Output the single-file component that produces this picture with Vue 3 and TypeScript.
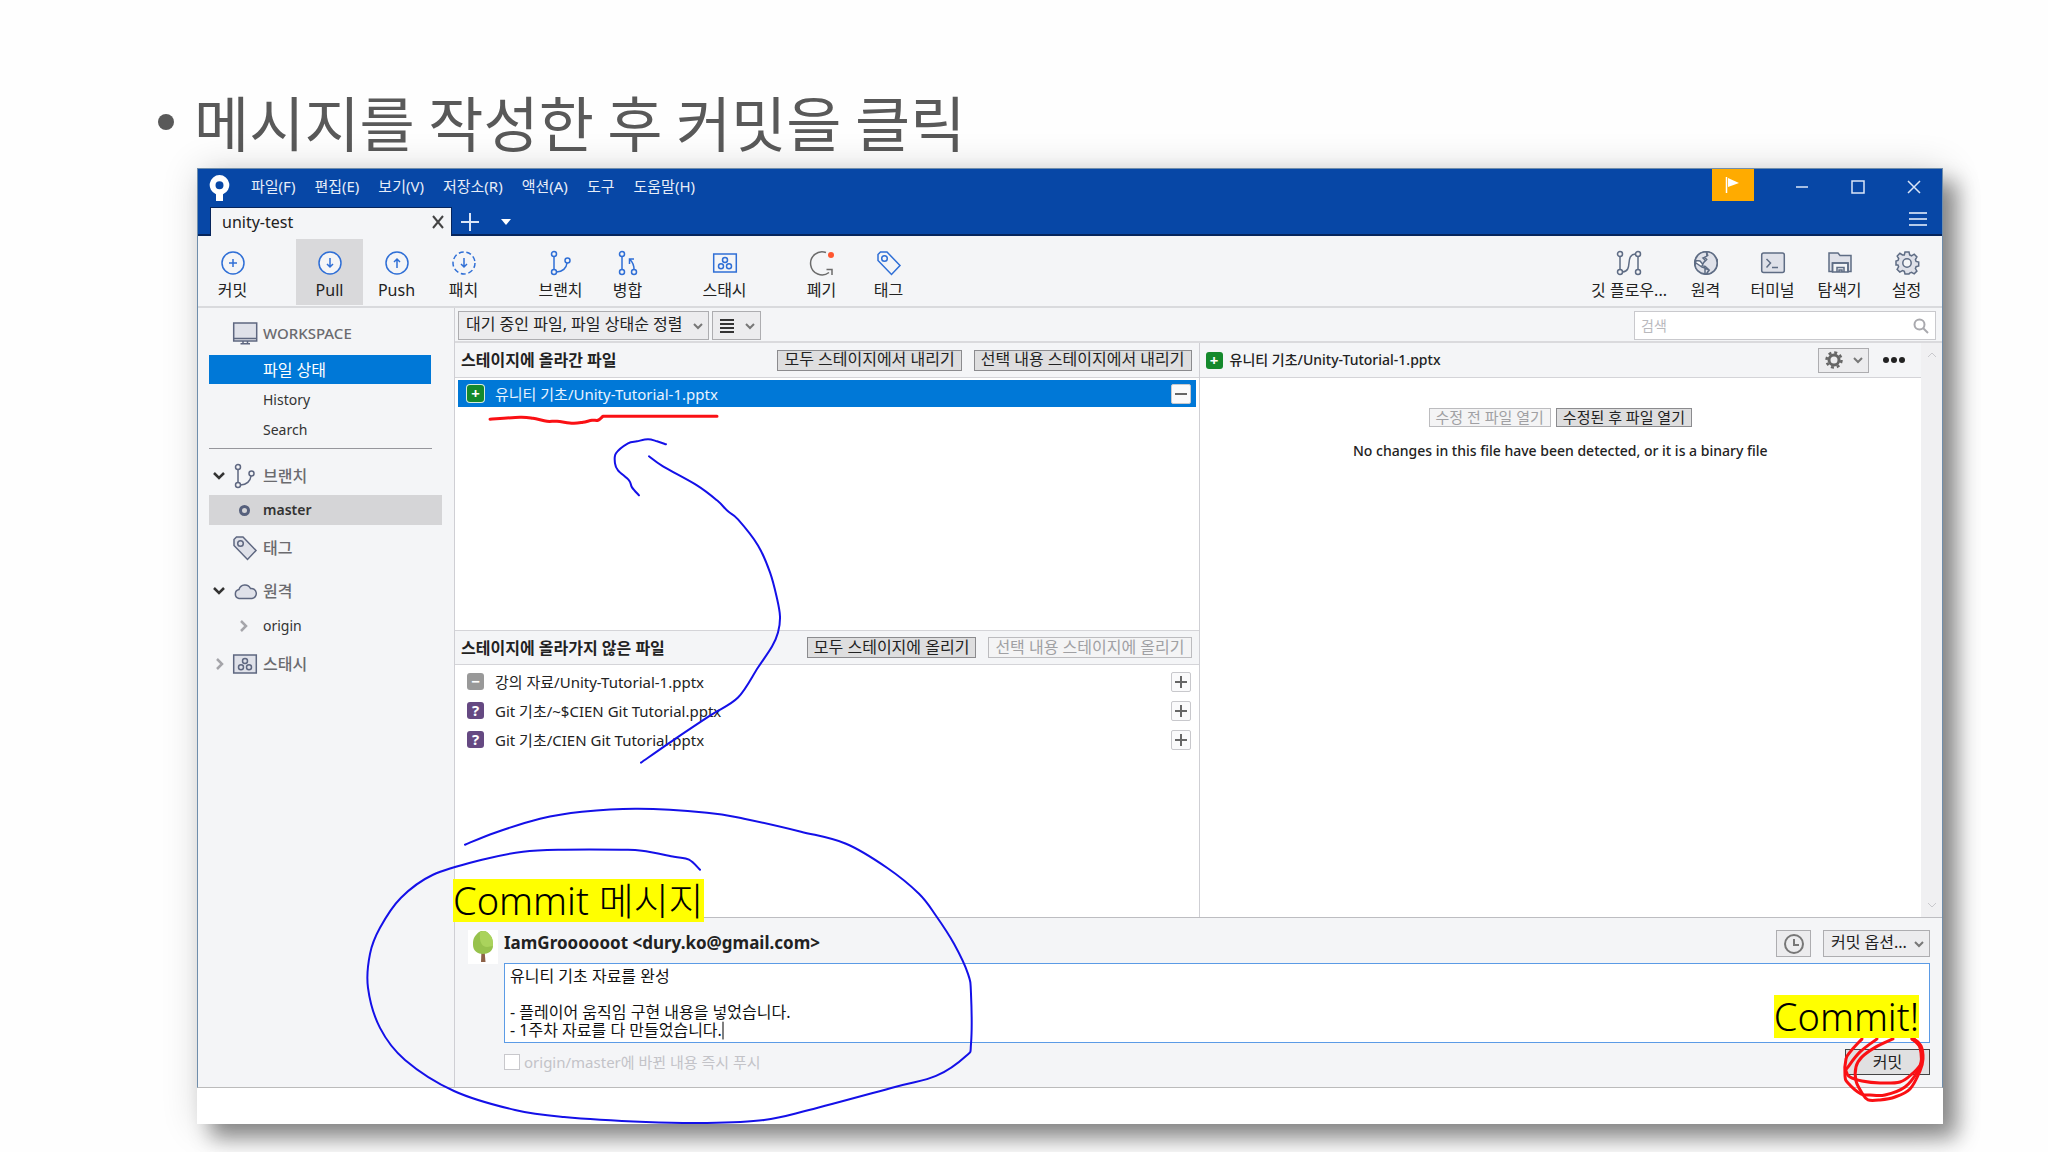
<script setup lang="ts">
import { ref } from 'vue'

type Point = [number, number]

const ICONS: Record<string, string> = {
  commit: '<circle cx="12" cy="12" r="11"/><path d="M12 8v8M8 12h8"/>',
  pull: '<circle cx="12" cy="12" r="11"/><path d="M12 7v9M9 13l3 3 3-3"/>',
  push: '<circle cx="12" cy="12" r="11"/><path d="M12 17V8M9 11l3-3 3 3"/>',
  fetch: '<circle cx="12" cy="12" r="11" stroke-dasharray="5 2.7"/><path d="M12 7v9M9 13l3 3 3-3"/>',
  branch: '<circle cx="5" cy="3" r="2.5"/><circle cx="5" cy="21" r="2.5"/><circle cx="18.500" cy="9.500" r="2.500"/><path d="M5 5.500v13M7.500 21c6 0 10-4 10.500-9"/>',
  merge: '<circle cx="6" cy="3" r="2.500"/><circle cx="6" cy="21" r="2.500"/><circle cx="18" cy="21" r="2.500"/><path d="M6 5.500v13M18 18.500c0-4-1-7-4-10M13.500 13V8H18"/>',
  stash: '<path d="M.7 3h22.600v18H.7z"/><circle cx="12" cy="9" r="2.500"/><circle cx="8" cy="15.300" r="2.500"/><circle cx="16" cy="15.300" r="2.500"/>',
  discard: '<path d="M16 1.500A11.500 11.500 0 1 0 19 21.500M16.500 18.500H22V24"/><circle cx="21" cy="4" r="3" fill="#ff5630" stroke="none"/>',
  tag: '<path d="M1 3.500 3.500 1H10l13 13.500L14.500 23.500 1 9.500z"/><circle cx="7.500" cy="7.500" r="2.800"/>',
  flow: '<circle cx="3" cy="3" r="2.500"/><circle cx="3" cy="21" r="2.500"/><circle cx="21" cy="3" r="2.500"/><circle cx="21" cy="21" r="2.500"/><path d="M3 5.500v13M21 5.500v13M5.500 21C17 20 7 4 18.500 3"/>',
  globe: '<circle cx="12" cy="12" r="11.300" fill="#fff"/><path d="M12.500.8C5 .8 1 6 .9 12l1.500-2.500L6 10l3 3.500 2.500-4L9 7l4-1.500zM2 12l6 4 3 1v6C6 22 1.500 19 1 14zM23 9l-3.500 2 .5 4 2 .5zM11 17l4 2-2 4h-2z" fill="#dfe1e9"/><path d="M12.500.8C19 .8 23 6 23.200 12c0 6-4.500 11-11 11.200l3-4.200-4-3.500-3-1 1.500-3 3-3-2-2 3-2z" fill="#dfe1e9"/>',
  terminal: '<rect x=".7" y="2" width="22.600" height="19.500" rx="2" fill="#dfe1e9"/><path d="m5.500 8 4 4-4 4.500M11 16.500h6"/>',
  explorer: '<path d="M1 20.500V2h9l2 2.500h11v16h-3V12H4.500v8.500z" fill="#dfe1e9"/><path d="M4.500 12H20v9H4.500zM9 21v-4.500h7V21M11 21v-2h3v2"/>',
  gear: '<path d="M10 1h4l.7 3 1.800.8 2.700-1.600 2.700 2.700-1.500 2.700.7 1.800 2.600.6v4l-2.600.7-.7 1.800 1.500 2.600-2.700 2.700-2.700-1.500-1.800.7L14 23h-4l-.7-2.700-1.800-.7-2.700 1.500-2.700-2.700 1.500-2.600-.7-1.800L1 14v-4l2-.6.7-1.800L2.200 5l2.700-2.700 2.600 1.600L9.300 4z" fill="#dfe1e9"/><circle cx="12" cy="12" r="4.200" fill="#f4f5f7"/>',
  monitor: '<rect x=".7" y="2" width="23" height="18" fill="#dfe1e9"/><path d="M.7 17.500h23M10 20v2.500M14.500 20v2.500M7.500 22.700h9.500"/>',
  cloud: '<path d="M6 19.500a4.600 4.600 0 0 1 0-9A6.200 6.200 0 0 1 17.500 9.500a5 5 0 0 1 1.500 10z" fill="#dfe1e9"/>',
}

const menus = ['파일(F)', '편집(E)', '보기(V)', '저장소(R)', '액션(A)', '도구', '도움말(H)']

const toolGroups = [
  [{ icon: 'commit', label: '커밋' }],
  [
    { icon: 'pull', label: 'Pull', active: true },
    { icon: 'push', label: 'Push' },
    { icon: 'fetch', label: '패치' },
  ],
  [
    { icon: 'branch', label: '브랜치' },
    { icon: 'merge', label: '병합' },
  ],
  [{ icon: 'stash', label: '스태시' }],
  [
    { icon: 'discard', label: '폐기', grey: true },
    { icon: 'tag', label: '태그' },
  ],
] as { icon: string; label: string; active?: boolean; grey?: boolean }[][]

const sideTools = [
  { icon: 'flow', label: '깃 플로우...' },
  { icon: 'globe', label: '원격' },
  { icon: 'terminal', label: '터미널' },
  { icon: 'explorer', label: '탐색기' },
  { icon: 'gear', label: '설정' },
]

const unstaged = [
  { kind: 'removed', mark: '−', name: '강의 자료/Unity-Tutorial-1.pptx' },
  { kind: 'unknown', mark: '?', name: 'Git 기초/~$CIEN Git Tutorial.pptx' },
  { kind: 'unknown', mark: '?', name: 'Git 기초/CIEN Git Tutorial.pptx' },
]

const message = ref('유니티 기초 자료를 완성\n\n- 플레이어 움직임 구현 내용을 넣었습니다.\n- 1주차 자료를 다 만들었습니다.')

// Smooth curve through hand-drawn points (Catmull-Rom to cubic Bézier).
function smooth(p: Point[]): string {
  let d = `M${p[0][0]} ${p[0][1]}`
  for (let i = 0; i < p.length - 1; i++) {
    const a = p[Math.max(i - 1, 0)]
    const b = p[i]
    const c = p[i + 1]
    const e = p[Math.min(i + 2, p.length - 1)]
    d += `C${b[0] + (c[0] - a[0]) / 6} ${b[1] + (c[1] - a[1]) / 6} ${c[0] - (e[0] - b[0]) / 6} ${c[1] - (e[1] - b[1]) / 6} ${c[0]} ${c[1]}`
  }
  return d
}

const bluePen = [
  smooth([[666, 444], [657, 441], [648, 439], [637, 441], [628, 443], [616, 453], [615, 463], [618, 470], [629, 480], [632, 487], [639, 495]]),
  smooth([[649, 456], [663, 466], [697, 485], [717, 500], [728, 511], [738, 519], [758, 545], [770, 572], [777, 598], [780, 616], [778, 632], [772, 646], [758, 667], [738, 697], [710, 715], [677, 737], [641, 762]]),
  smooth([[465, 844], [495, 832], [540, 818], [582, 811], [638, 808], [707, 812], [744, 818], [801, 831], [846, 843], [887, 867], [919, 893], [936, 915], [954, 943], [968, 973], [971, 993], [971, 1043], [966, 1055], [936, 1075], [895, 1086], [809, 1109], [764, 1119], [707, 1122], [646, 1121], [564, 1116], [515, 1109], [454, 1090], [405, 1059], [380, 1027], [368, 987], [370, 953], [380, 927], [401, 897], [433, 874], [482, 859], [523, 851], [564, 849], [621, 849], [642, 850], [674, 856], [689, 859], [700, 869]]),
]

const redPen = [
  smooth([[490, 419], [520, 417], [533, 418], [547, 421], [557, 421], [573, 423], [583, 422], [592, 420], [598, 420], [603, 416]]) + 'L717 416',
  smooth([[1862, 1038], [1851, 1050], [1846, 1058], [1845, 1075], [1848, 1082], [1861, 1093], [1870, 1094], [1885, 1094], [1905, 1086], [1918, 1070], [1922, 1058], [1920, 1046], [1912, 1038]]),
  smooth([[1877, 1038], [1860, 1051], [1848, 1066], [1846, 1070], [1850, 1076], [1862, 1080], [1880, 1082], [1900, 1081], [1912, 1073], [1921, 1062], [1919, 1043], [1912, 1038]]),
  smooth([[1893, 1038], [1876, 1046], [1862, 1056], [1856, 1066], [1856, 1080], [1862, 1092], [1868, 1099], [1880, 1099], [1895, 1096], [1910, 1088], [1920, 1070], [1923, 1058], [1921, 1045], [1914, 1038]]),
]
</script>

<template>
  <main class="slide">
    <h1 class="title"><span class="bullet"></span>메시지를 작성한 후 커밋을 클릭</h1>

    <section class="shot">
      <div class="app">
        <header class="titlebar">
          <div class="menubar">
            <svg class="logo" viewBox="0 0 22 26"><path fill="#fff" fill-rule="evenodd" d="M10.500 0a10 10 0 0 1 3.500 19.300V26H7v-6.700A10 10 0 0 1 10.500 0zm0 6.200a4 4 0 1 0 0 8 4 4 0 0 0 0-8z" /></svg>
            <nav class="menus"><button v-for="m in menus" :key="m" type="button">{{ m }}</button></nav>
            <button class="flag" type="button" aria-label="알림"><svg width="16" height="18" viewBox="0 0 16 18"><path d="M1.500 1v16" stroke="#fff" stroke-width="1.500" /><path d="M3 2l11 5-11 4z" fill="#fff" /></svg></button>
            <div class="window-buttons">
              <button type="button" aria-label="최소화"><svg viewBox="0 0 14 14"><path d="M1 7h12" /></svg></button>
              <button type="button" aria-label="최대화"><svg viewBox="0 0 14 14"><path d="M1 1h12v12H1z" /></svg></button>
              <button type="button" aria-label="닫기"><svg viewBox="0 0 14 14"><path d="M1 1l12 12M13 1 1 13" /></svg></button>
            </div>
          </div>
          <div class="tabs">
            <div class="tab">
              <span>unity-test</span>
              <button type="button" aria-label="탭 닫기"><svg width="12" height="14" viewBox="0 0 12 14"><path d="M1 1l10 12M11 1 1 13" stroke="#444" stroke-width="2" /></svg></button>
            </div>
            <button class="add" type="button" aria-label="새 탭"><svg width="18" height="18" viewBox="0 0 18 18"><path d="M9 0v18M0 9h18" stroke="#dbe6f7" stroke-width="2" /></svg></button>
            <button class="more" type="button" aria-label="탭 목록"><svg width="10" height="6" viewBox="0 0 10 6"><path d="M0 0h10L5 6z" fill="#fff" /></svg></button>
            <button class="burger" type="button" aria-label="메뉴"><svg width="18" height="16" viewBox="0 0 18 16"><path d="M0 2h18M0 8h18M0 14h18" stroke="#b6cbea" stroke-width="2" /></svg></button>
          </div>
        </header>

        <div class="toolbar">
          <div v-for="(g, i) in toolGroups" :key="i" class="group">
            <button v-for="t in g" :key="t.label" type="button" class="tool" :class="{ active: t.active, grey: t.grey }">
              <svg viewBox="-1 -1 26 26" v-html="ICONS[t.icon]"></svg>
              <span>{{ t.label }}</span>
            </button>
          </div>
          <div class="group end">
            <button v-for="t in sideTools" :key="t.label" type="button" class="tool slate">
              <svg viewBox="-1 -1 26 26" v-html="ICONS[t.icon]"></svg>
              <span>{{ t.label }}</span>
            </button>
          </div>
        </div>

        <div class="body">
          <aside class="sidebar">
            <div class="head workspace"><svg viewBox="-1 -1 26 26" v-html="ICONS.monitor"></svg>WORKSPACE</div>
            <a href="#" class="entry selected">파일 상태</a>
            <a href="#" class="entry">History</a>
            <a href="#" class="entry">Search</a>
            <hr />
            <div class="head branches">
              <svg class="fold" viewBox="0 0 12 12"><path d="m1 3 5 5 5-5" /></svg>
              <svg viewBox="-1 -1 26 26" v-html="ICONS.branch"></svg>브랜치
            </div>
            <a href="#" class="entry master"><i class="dot"></i>master</a>
            <div class="head tall"><svg class="filled" viewBox="-1 -1 26 26" v-html="ICONS.tag"></svg>태그</div>
            <div class="head">
              <svg class="fold" viewBox="0 0 12 12"><path d="m1 3 5 5 5-5" /></svg>
              <svg viewBox="-1 -1 26 26" v-html="ICONS.cloud"></svg>원격
            </div>
            <a href="#" class="entry origin"><svg class="fold shut" viewBox="0 0 12 12"><path d="m4 1 5 5-5 5" /></svg>origin</a>
            <div class="head tall">
              <svg class="fold shut" viewBox="0 0 12 12"><path d="m4 1 5 5-5 5" /></svg>
              <svg class="filled" viewBox="-1 -1 26 26" v-html="ICONS.stash"></svg>스태시
            </div>
          </aside>

          <div class="main">
            <div class="filters">
              <div class="picker">
                <select aria-label="정렬"><option>대기 중인 파일, 파일 상태순 정렬</option></select>
                <svg class="caret" viewBox="0 0 10 8"><path d="m1 2 4 4 4-4" /></svg>
              </div>
              <button type="button" class="picker view" aria-label="보기 방식">
                <svg width="14" height="16" viewBox="0 0 14 16"><path d="M0 2h14M0 6h14M0 10h14M0 14h14" stroke="#333" stroke-width="2" /></svg>
                <svg class="caret" viewBox="0 0 10 8"><path d="m1 2 4 4 4-4" /></svg>
              </button>
              <div class="search">
                <input type="text" placeholder="검색" aria-label="검색" />
                <svg width="16" height="16" viewBox="0 0 16 16" fill="none" stroke="#a9a9ae" stroke-width="2"><circle cx="6.500" cy="6.500" r="5" /><path d="m10 10 5 5" /></svg>
              </div>
            </div>

            <div class="panes">
              <div class="files">
                <div class="bar">
                  <h2>스테이지에 올라간 파일</h2>
                  <button type="button" class="flat">모두 스테이지에서 내리기</button>
                  <button type="button" class="flat">선택 내용 스테이지에서 내리기</button>
                </div>
                <ul class="list">
                  <li class="row chosen">
                    <span class="badge added">+</span><span class="name">유니티 기초/Unity-Tutorial-1.pptx</span>
                    <button type="button" aria-label="내리기"><svg viewBox="0 0 12 12"><path d="M0 6h12" /></svg></button>
                  </li>
                </ul>
                <div class="bar second">
                  <h2>스테이지에 올라가지 않은 파일</h2>
                  <button type="button" class="flat">모두 스테이지에 올리기</button>
                  <button type="button" class="flat" disabled>선택 내용 스테이지에 올리기</button>
                </div>
                <ul class="list">
                  <li v-for="f in unstaged" :key="f.name" class="row">
                    <span class="badge" :class="f.kind">{{ f.mark }}</span><span class="name">{{ f.name }}</span>
                    <button type="button" aria-label="올리기"><svg viewBox="0 0 12 12"><path d="M0 6h12M6 0v12" /></svg></button>
                  </li>
                </ul>
              </div>

              <div class="diff">
                <div class="diff-main">
                  <div class="bar">
                    <span class="badge added">+</span><span class="name">유니티 기초/Unity-Tutorial-1.pptx</span>
                    <button type="button" class="picker gear" aria-label="설정">
                      <svg width="18" height="18" viewBox="0 0 18 18"><circle cx="9" cy="9" r="5" fill="none" stroke="#666" stroke-width="3" /><circle cx="9" cy="9" r="7.500" fill="none" stroke="#666" stroke-width="2.500" stroke-dasharray="3 2.890" /></svg>
                      <svg class="caret" viewBox="0 0 10 8"><path d="m1 2 4 4 4-4" /></svg>
                    </button>
                    <button type="button" class="dots" aria-label="더 보기"><i></i><i></i><i></i></button>
                  </div>
                  <div class="empty">
                    <div class="open">
                      <button type="button" class="flat" disabled>수정 전 파일 열기</button>
                      <button type="button" class="flat">수정된 후 파일 열기</button>
                    </div>
                    <p>No changes in this file have been detected, or it is a binary file</p>
                  </div>
                </div>
                <div class="scroll">
                  <svg viewBox="0 0 10 8"><path d="m1 6 4-4 4 4" /></svg>
                  <svg viewBox="0 0 10 8"><path d="m1 2 4 4 4-4" /></svg>
                </div>
              </div>
            </div>

            <form class="commit" @submit.prevent>
              <div class="author">
                <svg class="avatar" viewBox="0 0 30 34"><path d="M0 0h30v34H0z" fill="#fff" /><path d="M13.500 20h3l1 12h-4.500z" fill="#8d6147" /><path d="M15 1c4 0 5 2 7 4 3 3 3 8 3 11 0 5-5 8-10 8S5 21 5 15c0-3 0-7 3-10 2-2 3-4 7-4z" fill="#97c24c" /><path d="M15 1c4 0 5 2 7 4 3 3 3 8 3 11l-6 1c-5 0-8-5-7-15z" fill="#aad35c" /></svg>
                <strong>IamGroooooot &lt;dury.ko@gmail.com&gt;</strong>
                <button type="button" class="picker clock" aria-label="이전 메시지"><svg width="20" height="20" viewBox="0 0 20 20" fill="none" stroke="#777" stroke-width="2"><circle cx="10" cy="10" r="9" /><path d="M10 5v6h5" /></svg></button>
                <div class="picker options">
                  <select aria-label="커밋 옵션"><option>커밋 옵션...</option></select>
                  <svg class="caret" viewBox="0 0 10 8"><path d="m1 2 4 4 4-4" /></svg>
                </div>
              </div>
              <div class="editor">
                <textarea v-model="message" rows="4" spellcheck="false" aria-label="커밋 메시지"></textarea>
              </div>
              <div class="submit">
                <label><input type="checkbox" disabled />origin/master에 바뀐 내용 즉시 푸시</label>
                <button type="submit" class="go">커밋</button>
              </div>
            </form>
          </div>
        </div>
      </div>

      <svg class="pen" viewBox="197 168 1746 955" preserveAspectRatio="none">
        <path v-for="d in bluePen" :key="d" :d="d" stroke="#1410e8" stroke-width="2" />
        <path v-for="d in redPen" :key="d" :d="d" stroke="#fa1014" stroke-width="3" />
        <path d="M723 1021v17" stroke="#000" stroke-width="1" />
      </svg>
      <mark class="note message">Commit 메시지</mark>
      <mark class="note button">Commit!</mark>
    </section>
  </main>
</template>

<style>
body {
  margin: 0;
  background: #fefefe;
}
</style>

<style scoped>
.slide {
  box-sizing: border-box;
  min-height: 100vh;
  padding: 80px 105px 29px 197px;
  overflow: hidden;
  font: 16px/20px "Noto Sans", "Noto Sans CJK KR", sans-serif;
  color: #222;
}
.slide * {
  box-sizing: border-box;
}
button, select, input, textarea {
  font: inherit;
  color: inherit;
  margin: 0;
  border-radius: 0;
}
button {
  display: flex;
  align-items: center;
  justify-content: center;
  padding: 0;
  border: 0;
  background: none;
  white-space: nowrap;
}
.title {
  position: relative;
  margin: 0 0 0 -3px;
  padding-bottom: 6px;
  font: 400 60px/82px "Noto Sans CJK KR", sans-serif;
  color: #595959;
}
.bullet {
  position: absolute;
  left: -36px;
  top: 34px;
  width: 16px;
  height: 16px;
  border-radius: 50%;
  background: #595959;
}
.shot {
  position: relative;
  padding-bottom: 36px;
  background: #fff;
  box-shadow: 14px 14px 20px rgba(0, 0, 0, 0.42), 2px 2px 36px rgba(0, 0, 0, 0.16);
}
.app {
  border: 1px solid #6f8dab;
  border-bottom-color: #bbb;
  background: #f4f5f7;
}

.titlebar {
  background: #0747a6;
  color: #e6edf8;
  border-bottom: 1px solid #f4f5f7;
}
.menubar {
  display: flex;
  height: 38px;
}
.logo {
  width: 22px;
  height: 26px;
  margin: 6px 20px 0 11px;
}
.menus {
  display: flex;
  gap: 19px;
  font-size: 15px;
}
.menus button {
  height: 34px;
}
.flag {
  width: 42px;
  height: 32px;
  margin-left: auto;
  margin-right: 20px;
  background: #ffab00;
}
.window-buttons {
  display: flex;
}
.window-buttons button {
  width: 56px;
  height: 36px;
}
.window-buttons svg {
  width: 14px;
  height: 14px;
  fill: none;
  stroke: #dbe6f7;
  stroke-width: 1.5;
}
.tabs {
  display: flex;
  align-items: center;
  height: 29px;
  padding-left: 12px;
  box-shadow: inset 0 -2px #06255c;
}
.tab {
  display: flex;
  align-items: center;
  justify-content: space-between;
  width: 242px;
  height: 29px;
  padding: 0 7px 0 11px;
  border: 1px solid #06255c;
  border-bottom: 0;
  background: #f4f5f7;
  color: #222;
}
.add {
  margin-left: 9px;
}
.more {
  margin-left: 22px;
}
.burger {
  margin: 0 15px 6px auto;
}

.toolbar {
  display: flex;
  gap: 30px;
  height: 71px;
  padding: 2px 2px 0 1px;
  border-bottom: 2px solid #d9dadd;
}
.group {
  display: flex;
}
.end {
  margin-left: auto;
}
.tool {
  flex-direction: column;
  justify-content: flex-start;
  gap: 4px;
  min-width: 67px;
  height: 66px;
  padding-top: 11px;
  color: #222;
}
.end .tool:first-child {
  min-width: 86px;
}
.tool svg {
  width: 26px;
  height: 26px;
  fill: none;
  stroke: #2f6fd6;
  stroke-width: 1.5;
}
.tool.active {
  background: #d9d9db;
}
.tool.active svg {
  fill: #f4f5f7;
}
.tool.grey svg {
  stroke: #6b6b6b;
}
.tool.slate svg {
  stroke: #5e6c84;
}

.body {
  display: grid;
  grid-template-columns: 257px 1fr;
}
.sidebar {
  padding: 12px 12px 0 11px;
  border-right: 1px solid #cfcfd4;
  color: #333;
}
.head {
  position: relative;
  display: flex;
  align-items: center;
  gap: 5px;
  height: 40px;
  padding-left: 23px;
  color: #6b6b6f;
  font-weight: 500;
}
.head svg {
  width: 26px;
  height: 26px;
  fill: none;
  stroke: #5e6780;
  stroke-width: 1.5;
}
.head svg.filled {
  fill: #dfe1e9;
}
.head .fold {
  position: absolute;
  left: 4px;
}
.sidebar .fold {
  width: 12px;
  height: 12px;
  fill: none;
  stroke: #333;
  stroke-width: 2.5;
}
.sidebar .fold.shut {
  stroke: #a5a5aa;
}
.head.workspace {
  height: 26px;
  margin-bottom: 9px;
  font-size: 15px;
}
.head.branches {
  height: 38px;
}
.head.tall {
  height: 46px;
}
.entry {
  display: flex;
  align-items: center;
  height: 30px;
  margin-right: 11px;
  padding-left: 54px;
  font-size: 14px;
  color: #333;
  text-decoration: none;
}
.entry.selected {
  height: 29px;
  margin-bottom: 1px;
  background: #0078d7;
  color: #fff;
  font-size: 16px;
}
hr {
  margin: 3px 10px 8px 0;
  border: 0;
  border-top: 1px solid #96969c;
}
.entry.master {
  margin-right: 0;
  padding-left: 30px;
  gap: 13px;
  background: #d5d5d7;
  font-weight: 600;
}
.dot {
  width: 11px;
  height: 11px;
  border: 3px solid #56607c;
  border-radius: 50%;
}
.entry.origin {
  padding-left: 28px;
  gap: 14px;
}

.main {
  display: flex;
  flex-direction: column;
  min-width: 0;
}
.filters {
  display: flex;
  gap: 3px;
  height: 35px;
  padding: 3px 6px 0 3px;
  border-bottom: 2px solid #dadadd;
}
.picker {
  position: relative;
  display: flex;
  align-items: center;
  height: 29px;
  border: 1px solid #adadb0;
  background: #ececee;
}
.picker select {
  height: 100%;
  appearance: none;
  border: 0;
  padding: 0 25px 3px 7px;
  background: none;
}
.caret {
  position: absolute;
  right: 5px;
  width: 10px;
  height: 8px;
  fill: none;
  stroke: #777;
  stroke-width: 2;
}
.view {
  width: 49px;
  justify-content: flex-start;
  padding-left: 7px;
}
.search {
  display: flex;
  align-items: center;
  width: 302px;
  height: 29px;
  margin-left: auto;
  padding: 0 6px;
  border: 1px solid #c9c9cd;
  background: #fff;
}
.search input {
  flex: 1;
  min-width: 0;
  border: 0;
  padding: 0;
  background: none;
  font-size: 14px;
}
.search input::placeholder {
  color: #b9b9bd;
}

.panes {
  display: grid;
  grid-template-columns: 1fr 1fr;
  min-height: 574px;
}
.files {
  display: grid;
  grid-template-rows: auto 1fr auto 1fr;
  background: #fff;
}
.bar {
  display: flex;
  align-items: center;
  gap: 12px;
  height: 35px;
  padding: 0 7px 0 6px;
  border-bottom: 1px solid #d4d4d8;
  background: #f4f5f7;
}
.bar.second {
  border-top: 1px solid #d4d4d8;
}
.bar h2 {
  margin: 0 auto 0 0;
  font-size: 16px;
  font-weight: 700;
}
.flat {
  height: 21px;
  padding: 0 6px 2px;
  border: 1px solid #8b8b8e;
  background: #dededf;
}
.flat:disabled {
  border-color: #bcbcbf;
  background: #f4f4f5;
  color: #a0a0a3;
}
.list {
  margin: 0;
  padding: 2px 3px;
  list-style: none;
}
.row {
  display: flex;
  align-items: center;
  height: 29px;
  padding: 0 5px 0 9px;
  font-size: 15px;
}
.row.chosen {
  height: 27px;
  background: #0078d7;
  color: #e8f3ff;
}
.row button {
  width: 20px;
  height: 20px;
  margin-left: auto;
  border: 1px solid #c8c8cc;
  border-radius: 2px;
  background: #fafafb;
}
.row button svg {
  width: 12px;
  height: 12px;
  stroke: #666;
  stroke-width: 2;
}
.badge {
  display: flex;
  align-items: center;
  justify-content: center;
  width: 17px;
  height: 17px;
  border-radius: 3px;
  color: #fff;
  font-size: 15px;
  line-height: 17px;
  font-weight: 700;
}
.row .name {
  margin-left: 11px;
}
.added {
  background: #14892c;
}
.chosen .added {
  box-shadow: 0 0 0 1px #d8ecdc;
}
.removed {
  background: #999;
}
.unknown {
  background: #654982;
}

.diff {
  display: grid;
  grid-template-columns: 1fr 21px;
  border-left: 1px solid #cfcfd4;
}
.diff-main {
  display: flex;
  flex-direction: column;
}
.diff .name {
  margin-left: -5px;
  margin-right: auto;
  font-size: 14px;
  font-weight: 500;
}
.gear {
  width: 51px;
  height: 25px;
  padding-left: 6px;
  justify-content: flex-start;
}
.dots {
  gap: 2px;
  padding: 0 9px 0 2px;
}
.dots i {
  width: 6px;
  height: 6px;
  border-radius: 50%;
  background: #222;
}
.empty {
  flex: 1;
  padding-top: 30px;
  background: #fff;
  text-align: center;
}
.open {
  display: flex;
  justify-content: center;
  gap: 5px;
}
.open .flat {
  height: 19px;
  font-size: 15px;
}
.empty p {
  margin: 14px 0 0;
  font-size: 14px;
  font-weight: 500;
}
.scroll {
  display: flex;
  flex-direction: column;
  justify-content: space-between;
  align-items: center;
  padding: 8px 0;
  background: #f0f0f2;
}
.scroll svg {
  width: 10px;
  height: 8px;
  fill: none;
  stroke: #c9c9cd;
}

.commit {
  padding: 12px 12px 12px 13px;
  border-top: 1px solid #bdbdc1;
}
.author {
  display: flex;
  align-items: flex-start;
  height: 33px;
}
.avatar {
  width: 30px;
  height: 34px;
}
.author strong {
  margin: 3px auto 0 6px;
  font-size: 17px;
  font-weight: 700;
}
.author .picker {
  height: 27px;
}
.clock {
  width: 35px;
  justify-content: center;
  margin-right: 12px;
}
.options select {
  padding-right: 22px;
}
.editor {
  padding-left: 36px;
}
textarea {
  display: block;
  width: 100%;
  height: 80px;
  padding: 3px 5px;
  border: 1px solid #5b9be6;
  outline: 0;
  resize: none;
  overflow: hidden;
  background: #fff;
  line-height: 18px;
  color: #111;
}
.submit {
  display: flex;
  align-items: center;
  justify-content: space-between;
  height: 26px;
  margin-top: 6px;
  padding-left: 36px;
}
.submit label {
  display: flex;
  align-items: center;
  gap: 4px;
  font-size: 15px;
  color: #c3c3c8;
}
.submit input {
  appearance: none;
  width: 16px;
  height: 16px;
  border: 1px solid #c8c8cc;
  background: #fff;
}
.go {
  width: 85px;
  height: 26px;
  border: 1px solid #444;
  background: #e0e0e1;
}

.pen {
  position: absolute;
  inset: 0;
  width: 100%;
  height: 100%;
  overflow: visible;
  fill: none;
  stroke-linecap: round;
  stroke-linejoin: round;
  pointer-events: none;
}
.note {
  position: absolute;
  background: #ff0;
  color: #000;
  font-size: 38px;
  line-height: 43px;
  font-weight: 300;
  white-space: nowrap;
}
.note.message {
  left: 256px;
  bottom: 202px;
}
.note.button {
  right: 24px;
  bottom: 86px;
}
</style>
